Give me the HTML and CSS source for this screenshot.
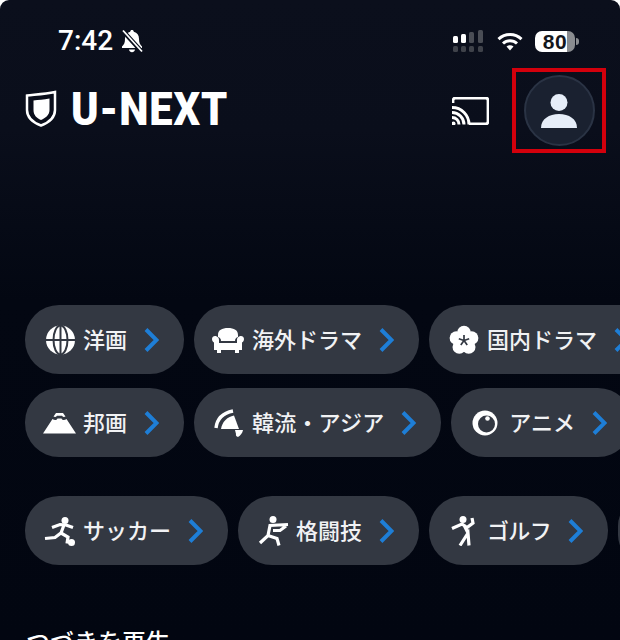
FILE: index.html
```html
<!DOCTYPE html>
<html>

<head>
    <meta charset="utf-8">
    <title>U-NEXT</title>
    <link rel="stylesheet" href="styles.css">
</head>

<body>
    <div class="screen">
        <div class="status-bar">
            <div class="status-left">
                <span class="clock">7:42</span>
                <svg class="bell" viewBox="0 0 22 24">
                    <path d="M11 1c1 0 1.700.7 1.800 1.700 3.400.8 5.200 3.500 5.200 7 0 4 1 5.800 3 7.800v1.500H1v-1.500c2-2 3-3.800 3-7.800 0-3.500 1.800-6.200 5.200-7C9.300 1.700 10 1 11 1zM8 20.500h6c-.3 1.700-1.500 2.700-3 2.700s-2.700-1-3-2.700z" fill="#fff"/>
                    <path d="M2 2l19 21" stroke="#0a0f1d" stroke-width="4.500"/>
                    <path d="M2 1.500l19 21" stroke="#fff" stroke-width="1.800"/>
                </svg>
            </div>
            <div class="status-right">
                <svg class="signal" viewBox="0 0 31 22">
                    <rect x="0" y="6" width="5" height="7" rx="1.500" fill="#fff"/>
                    <rect x="8" y="4" width="5" height="9" rx="1.500" fill="#fff"/>
                    <rect x="16" y="2" width="5" height="11" rx="1.500" fill="#4a4d55"/>
                    <rect x="25" y="0" width="5" height="13" rx="1.500" fill="#4a4d55"/>
                    <rect x="0" y="16" width="5" height="6" rx="1.500" fill="#3f424a"/>
                    <rect x="8" y="16" width="5" height="6" rx="1.500" fill="#3f424a"/>
                    <rect x="16" y="16" width="5" height="6" rx="1.500" fill="#3f424a"/>
                    <rect x="25" y="16" width="5" height="6" rx="1.500" fill="#3f424a"/>
                </svg>
                <svg class="wifi" viewBox="0 0 26 19">
                    <path d="M1.500 7.200C8 1 18 1 24.500 7.200" fill="none" stroke="#fff" stroke-width="3"/>
                    <path d="M6 11.500c4-3.700 10-3.700 14 0" fill="none" stroke="#fff" stroke-width="3"/>
                    <path d="M9.500 14.500c2-1.700 5-1.700 7 0L13 18.500z" fill="#fff"/>
                </svg>
                <div class="battery">
                    <span class="battery-level">80</span>
                    <span class="battery-nub"></span>
                </div>
            </div>
        </div>

        <header class="top-bar">
            <div class="logo">
                <svg class="logo-shield" viewBox="0 0 32 37">
                    <path d="M2 5.500C11 4.500 20 4 30 2v18c0 8-6 12.500-14 15.500C8 32.500 2 28 2 20z" fill="none" stroke="#fff" stroke-width="2.500"/>
                    <path d="M8.500 10.500c5-.5 10-1 16-2V20c0 5-4 8-8.500 10-4.500-2-7.500-5-7.500-10z" fill="#fff"/>
                </svg>
                <span class="logo-text">U-NEXT</span>
            </div>
            <div class="top-actions">
                <svg class="cast" viewBox="0 0 37 28">
                    <path d="M1 6V3.500C1 2 2 1 3.500 1h30C35 1 36 2 36 3.500v21c0 1.500-1 2.500-2.500 2.500H17" fill="none" stroke="#fff" stroke-width="2.800"/>
                    <path d="M0 10.500c9.500 0 17 7.500 17 17M0 15.500c6.500 0 12 5.500 12 12M0 20.500c4 0 7 3 7 7" fill="none" stroke="#fff" stroke-width="3"/>
                    <circle cx="1.500" cy="26.500" r="2" fill="#fff"/>
                </svg>
                <div class="account-frame">
                    <div class="avatar">
                        <svg class="avatar-icon" viewBox="0 0 36 36">
                            <circle cx="18" cy="9.500" r="8.500" fill="#e6edf8"/>
                            <path d="M0 35c0-9 8-14 18-14s18 5 18 14z" fill="#e6edf8"/>
                        </svg>
                    </div>
                </div>
            </div>
        </header>

        <main class="genres">
            <div class="pill-row">
                <a class="pill">
                    <svg class="pill-icon" viewBox="0 0 33 30">
                        <circle cx="17.500" cy="15" r="14.500" fill="#fff"/>
                        <ellipse cx="17.500" cy="15" rx="7" ry="14.500" fill="none" stroke="#333842" stroke-width="2"/>
                        <path d="M17.500 0v30M3 15h29" stroke="#333842" stroke-width="2"/>
                    </svg>
                    <span class="pill-label">洋画</span>
                    <svg class="chevron" viewBox="0 0 15 24"><path d="M2 1.500L12.500 12 2 22.500"/></svg>
                </a>
                <a class="pill">
                    <svg class="pill-icon" viewBox="0 0 33 28">
                        <path d="M6 9C6 4 10 2 16 2s10 2 10 7v2c-2 .5-3 2-3 4H9c0-2-1-3.500-3-4z" fill="#fff"/>
                        <path d="M0 13c0-2 1.500-3 3-3s4 1 4 4v3h18v-3c0-3 2.500-4 4-4s3 1 3 3-1 3-2 3.500V24H2v-7.500C1 16 0 15 0 13z" fill="#fff"/>
                        <path d="M5 24h4v3H5zM23 24h4v3h-4z" fill="#fff"/>
                    </svg>
                    <span class="pill-label">海外ドラマ</span>
                    <svg class="chevron" viewBox="0 0 15 24"><path d="M2 1.500L12.500 12 2 22.500"/></svg>
                </a>
                <a class="pill">
                    <svg class="pill-icon" viewBox="0 0 33 30">
                        <circle cx="17" cy="7.500" r="6.800" fill="#fff"/>
                        <circle cx="24.600" cy="13" r="6.800" fill="#fff"/>
                        <circle cx="21.700" cy="22" r="6.800" fill="#fff"/>
                        <circle cx="12.300" cy="22" r="6.800" fill="#fff"/>
                        <circle cx="9.400" cy="13" r="6.800" fill="#fff"/>
                        <circle cx="17" cy="15.500" r="6" fill="#fff"/>
                        <path d="M17 15.500V10M17 15.500l5.200-1.700M17 15.500l3.200 4.500M17 15.500L13.800 20M17 15.500l-5.200-1.700" stroke="#333842" stroke-width="1.700"/>
                    </svg>
                    <span class="pill-label">国内ドラマ</span>
                    <svg class="chevron" viewBox="0 0 15 24"><path d="M2 1.500L12.500 12 2 22.500"/></svg>
                </a>
            </div>

            <div class="pill-row">
                <a class="pill">
                    <svg class="pill-icon" viewBox="0 0 33 21">
                        <path d="M13 .5h7l2.500 3.500c-1.500.8-2.500.5-3.500-.8h-5c-1 1.300-2 1.600-3.500.8z" fill="#fff"/>
                        <path d="M9.500 6.500c2 1.500 4 1.500 5-.5h4c1 2 3 2 5 .5L33 21H0z" fill="#fff"/>
                    </svg>
                    <span class="pill-label">邦画</span>
                    <svg class="chevron" viewBox="0 0 15 24"><path d="M2 1.500L12.500 12 2 22.500"/></svg>
                </a>
                <a class="pill">
                    <svg class="pill-icon" viewBox="0 0 33 30">
                        <path d="M4 20C5 11 11 5 21 3" fill="none" stroke="#fff" stroke-width="3.400"/>
                        <path d="M9 21c1-7 6-12 13-13.500L27 21z" fill="#fff"/>
                        <path d="M23 22h8c-.5 3-2.500 5.500-5 7-1.500-.5-2.500-1.500-2-3z" fill="#fff"/>
                    </svg>
                    <span class="pill-label pill-label-wide">韓流・アジア</span>
                    <svg class="chevron" viewBox="0 0 15 24"><path d="M2 1.500L12.500 12 2 22.500"/></svg>
                </a>
                <a class="pill">
                    <svg class="pill-icon" viewBox="0 0 33 30">
                        <circle cx="16" cy="15" r="12.500" fill="#fff"/>
                        <circle cx="17.500" cy="16" r="8.500" fill="#333842"/>
                        <circle cx="18.500" cy="10.500" r="2.300" fill="#fff"/>
                    </svg>
                    <span class="pill-label">アニメ</span>
                    <svg class="chevron" viewBox="0 0 15 24"><path d="M2 1.500L12.500 12 2 22.500"/></svg>
                </a>
            </div>

            <div class="pill-row sports">
                <a class="pill">
                    <svg class="pill-icon" viewBox="0 0 33 30">
                        <circle cx="22" cy="4.500" r="3.500" fill="#fff"/>
                        <path d="M9 11.500l8-3 6 .5 7 2.500M21 9l-3 8M2 22.500l10-1 6-4.500 7 4-1 6.500" fill="none" stroke="#fff" stroke-width="3.200"/>
                        <circle cx="28.500" cy="26.500" r="3.500" fill="#fff"/>
                    </svg>
                    <span class="pill-label">サッカー</span>
                    <svg class="chevron" viewBox="0 0 15 24"><path d="M2 1.500L12.500 12 2 22.500"/></svg>
                </a>
                <a class="pill">
                    <svg class="pill-icon" viewBox="0 0 33 30">
                        <circle cx="17" cy="3.500" r="3.500" fill="#fff"/>
                        <path d="M32 8.500l-18 1-2 10M17 14.500h7l6-4.500M4 27l8-7.500 9 3 2 7" fill="none" stroke="#fff" stroke-width="3.200"/>
                    </svg>
                    <span class="pill-label">格闘技</span>
                    <svg class="chevron" viewBox="0 0 15 24"><path d="M2 1.500L12.500 12 2 22.500"/></svg>
                </a>
                <a class="pill">
                    <svg class="pill-icon" viewBox="0 0 33 30">
                        <circle cx="16" cy="3.500" r="3.500" fill="#fff"/>
                        <path d="M5 12.500L15 8l5 3.500L26 7l-1-5M17 9l4 8M13 29.500L21 17l1 12.500" fill="none" stroke="#fff" stroke-width="3.200"/>
                    </svg>
                    <span class="pill-label pill-label-tight">ゴルフ</span>
                    <svg class="chevron" viewBox="0 0 15 24"><path d="M2 1.500L12.500 12 2 22.500"/></svg>
                </a>
                <a class="pill pill-next"></a>
            </div>

            <h2 class="section-title">つづきを再生</h2>
        </main>
    </div>
</body>

</html>
```

FILE: styles.css
```css
html,
body {
    margin: 0;
    height: 640px;
    overflow: hidden;
    background: #fff;
}

body {
    font-family: "Noto Sans CJK JP", "Noto Sans", sans-serif;
    color: #fff;
}

.screen {
    height: 640px;
    overflow: hidden;
    border-radius: 9px 9px 0 0;
    background: linear-gradient(#0b0f1c 0, #0a0e1b 130px, #030712 300px, #020611 100%);
}

.status-bar {
    display: flex;
    justify-content: space-between;
    align-items: center;
    height: 54px;
    padding: 14px 41px 0 58px;
}

.status-left,
.status-right {
    display: flex;
    align-items: center;
}

.clock {
    font-family: Roboto, sans-serif;
    font-size: 28px;
    font-weight: 500;
    line-height: 1;
}

.bell {
    width: 22px;
    height: 24px;
    margin-left: 8px;
}

.signal {
    width: 31px;
    height: 22px;
}

.wifi {
    width: 26px;
    height: 19px;
    margin-left: 13px;
}

.battery {
    position: relative;
    width: 40px;
    height: 21px;
    margin: 0 4px 0 12px;
    border-radius: 7px;
    background: linear-gradient(90deg, #fff 80%, #8a8c90 80%);
    text-align: center;
}

.battery-level {
    display: block;
    font-family: "Liberation Sans", sans-serif;
    font-size: 21px;
    font-weight: 700;
    line-height: 21px;
    letter-spacing: .5px;
    color: #14161c;
}

.battery-nub {
    position: absolute;
    top: 7px;
    right: -4px;
    width: 3px;
    height: 7px;
    border-radius: 0 3px 3px 0;
    background: #8a8c90;
}

.top-bar {
    display: flex;
    justify-content: space-between;
    align-items: center;
    padding: 0 14px 0 25px;
}

.logo {
    display: flex;
    align-items: center;
    margin-top: -4px;
}

.logo-shield {
    width: 32px;
    height: 37px;
}

.logo-text {
    margin-left: 14px;
    font-family: Roboto, sans-serif;
    font-size: 47px;
    font-weight: 900;
    line-height: 1;
    letter-spacing: 1px;
    transform: scaleX(.886);
    transform-origin: left center;
}

.top-actions {
    display: flex;
    align-items: center;
}

.cast {
    width: 37px;
    height: 28px;
    margin-right: 23px;
}

.account-frame {
    display: flex;
    justify-content: center;
    align-items: center;
    box-sizing: border-box;
    width: 94px;
    height: 85px;
    border: 4px solid #d3000c;
}

.avatar {
    display: flex;
    justify-content: center;
    align-items: center;
    box-sizing: border-box;
    width: 71px;
    height: 71px;
    border: 2px solid #2a3344;
    border-radius: 50%;
    background: #1a2130;
}

.avatar-icon {
    width: 36px;
    height: 36px;
}

.genres {
    margin-top: 152px;
}

.pill-row {
    display: flex;
    gap: 10px;
    margin-bottom: 14px;
    padding-left: 25px;
    overflow: hidden;
}

.pill-row.sports {
    margin-top: 39px;
    margin-bottom: 0;
}

.pill {
    display: flex;
    flex-shrink: 0;
    align-items: center;
    height: 69px;
    padding: 0 25px 0 18px;
    border-radius: 34px;
    background: #333842;
}

.pill-next {
    width: 60px;
    padding: 0;
}

.pill-icon {
    width: 33px;
    height: 30px;
    flex-shrink: 0;
}

.pill-label {
    margin-left: 7px;
    padding-bottom: 4px;
    font-size: 22px;
    font-weight: 500;
    line-height: 1;
    white-space: nowrap;
    color: #f1f2f4;
}

.pill-label-wide {
    letter-spacing: .2px;
}

.pill-label-tight {
    letter-spacing: -.7px;
}

.chevron {
    width: 15px;
    height: 24px;
    margin-left: 17px;
    flex-shrink: 0;
    fill: none;
    stroke: #1e7ed6;
    stroke-width: 4;
}

.section-title {
    margin: 62px 0 0 26px;
    font-size: 24px;
    font-weight: 500;
    line-height: 1.2;
}
```
